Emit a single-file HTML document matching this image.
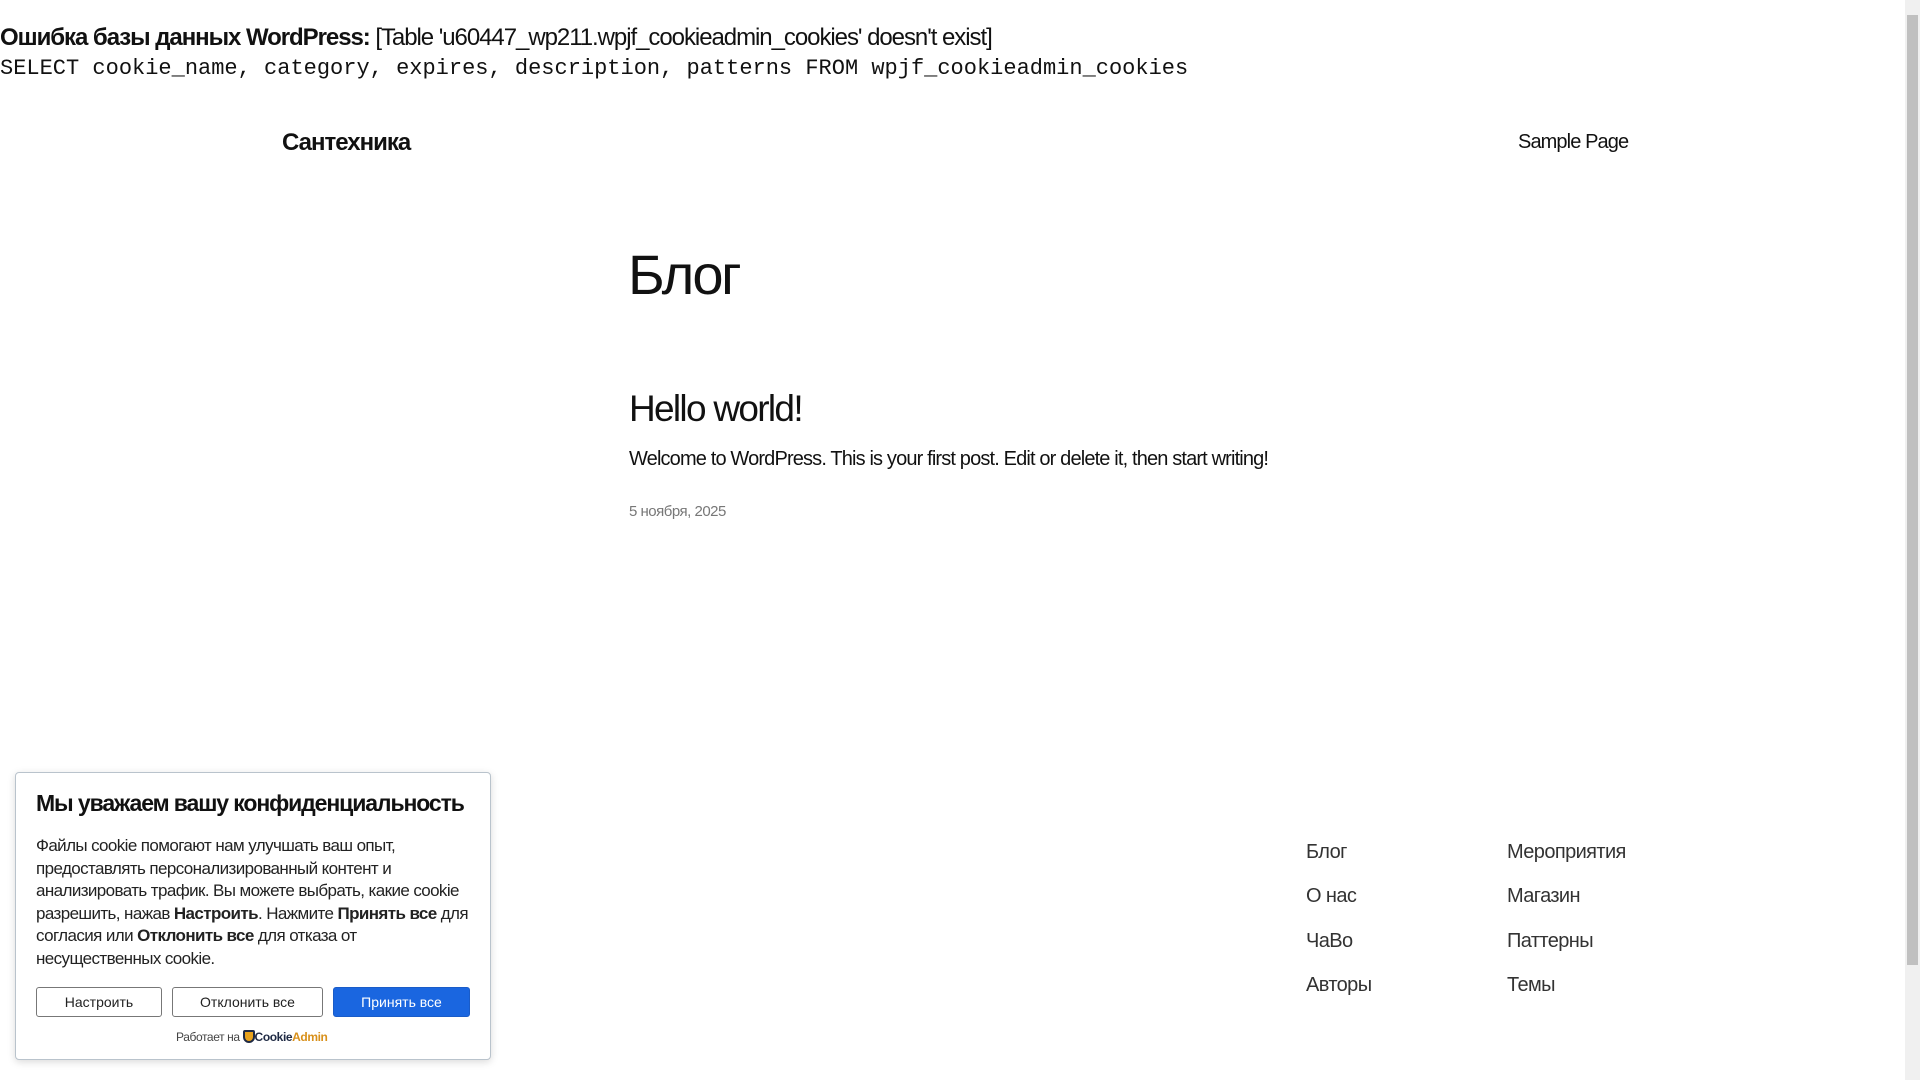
<!DOCTYPE html>
<html><head><meta charset="utf-8"><style>
*{margin:0;padding:0;box-sizing:border-box}
body{width:1920px;height:1080px;overflow:hidden;background:#fff;font-family:"Liberation Sans",sans-serif;color:#111;position:relative}
.a{position:absolute;white-space:nowrap}
.sb{position:absolute;left:1905px;top:0;width:15px;height:1080px;background:#f0f0f0}
.th{position:absolute;left:2px;top:15px;width:11px;height:950px;background:#c0c0c0}
.nav{font-size:20px;color:#333;letter-spacing:-0.6px}
.ck{position:absolute;left:15px;top:772px;width:476px;height:288px;border:1px solid #b9c3cc;border-radius:4px;background:#fff;box-shadow:0 2px 8px rgba(0,0,0,.15)}
.btn{position:absolute;top:214px;height:30px;border:1px solid #777;border-radius:3px;font-size:14px;text-align:center;line-height:28px;color:#222;background:#fff}
</style></head><body>
<div class="a" style="left:0;top:24px;font-size:24px;letter-spacing:-1.05px"><b>Ошибка базы данных WordPress:</b> [Table 'u60447_wp211.wpjf_cookieadmin_cookies' doesn't exist]</div>
<div class="a" style="left:0;top:56px;font-family:'Liberation Mono',monospace;font-size:22px">SELECT cookie_name, category, expires, description, patterns FROM wpjf_cookieadmin_cookies</div>
<div class="a" style="left:282px;top:129px;font-size:24px;font-weight:600;letter-spacing:-1px">Сантехника</div>
<div class="a" style="left:1518px;top:131px;font-size:20px;letter-spacing:-0.9px">Sample Page</div>
<div class="a" style="left:628px;top:242px;font-size:56px;letter-spacing:-2.5px">Блог</div>
<div class="a" style="left:629px;top:388px;font-size:37px;letter-spacing:-1.7px">Hello world!</div>
<div class="a" style="left:629px;top:448px;font-size:20px;letter-spacing:-0.85px">Welcome to WordPress. This is your first post. Edit or delete it, then start writing!</div>
<div class="a" style="left:629px;top:503px;font-size:15px;color:#777;letter-spacing:-0.5px">5 ноября, 2025</div>
<div class="a nav" style="left:1306px;top:841px">Блог</div>
<div class="a nav" style="left:1306px;top:885px">О нас</div>
<div class="a nav" style="left:1306px;top:930px">ЧаВо</div>
<div class="a nav" style="left:1306px;top:974px">Авторы</div>
<div class="a nav" style="left:1507px;top:841px">Мероприятия</div>
<div class="a nav" style="left:1507px;top:885px">Магазин</div>
<div class="a nav" style="left:1507px;top:930px">Паттерны</div>
<div class="a nav" style="left:1507px;top:974px">Темы</div>
<div class="ck">
<div class="a" style="left:20px;top:17px;font-size:23px;font-weight:600;letter-spacing:-1.1px">Мы уважаем вашу конфиденциальность</div>
<div style="position:absolute;left:20px;top:62px;width:440px;font-size:17px;line-height:22.5px;letter-spacing:-0.6px;color:#222">Файлы cookie помогают нам улучшать ваш опыт, предоставлять персонализированный контент и анализировать трафик. Вы можете выбрать, какие cookie разрешить, нажав <b>Настроить</b>. Нажмите <b>Принять все</b> для согласия или <b>Отклонить все</b> для отказа от несущественных cookie.</div>
<div class="btn" style="left:20px;width:126px">Настроить</div>
<div class="btn" style="left:156px;width:151px">Отклонить все</div>
<div class="btn" style="left:317px;width:137px;background:#1a66e0;border-color:#1a5cc8;color:#fff">Принять все</div>
<div class="a" style="left:160px;top:257px;font-size:12px;color:#444;letter-spacing:-0.4px">Работает на <span style="display:inline-block;width:12px;height:13px;background:#e8a21c;border-radius:2px 2px 6px 6px;vertical-align:-2px;border:2px solid #1f2a44"></span><b style="color:#1f2a44">Cookie</b><b style="color:#d8901a">Admin</b></div>
</div>
<div class="sb"><div class="th"></div></div>
</body></html>
